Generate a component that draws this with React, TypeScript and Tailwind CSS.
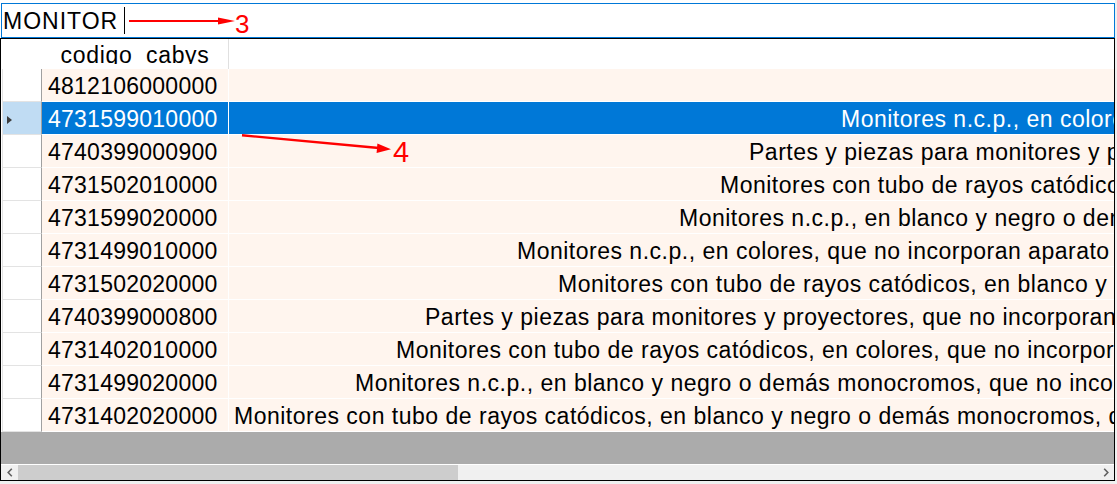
import React from "react";

type Row = {
  code: string;
  desc: string;
  indent: string;
  selected?: boolean;
};

// Descriptions are right-aligned in a column wider than the viewport,
// so each one begins at its own offset and runs past the right edge.
const rows: Row[] = [
  { code: "4812106000000", desc: "", indent: "pl-[6px]" },
  {
    code: "4731599010000",
    desc: "Monitores n.c.p., en colores, que no incorporan aparato receptor de televisión",
    indent: "pl-[612px]",
    selected: true,
  },
  {
    code: "4740399000900",
    desc: "Partes y piezas para monitores y proyectores",
    indent: "pl-[520px]",
  },
  {
    code: "4731502010000",
    desc: "Monitores con tubo de rayos catódicos, en colores",
    indent: "pl-[491px]",
  },
  {
    code: "4731599020000",
    desc: "Monitores n.c.p., en blanco y negro o demás monocromos",
    indent: "pl-[450px]",
  },
  {
    code: "4731499010000",
    desc: "Monitores n.c.p., en colores, que no incorporan aparato de recepción de televisión",
    indent: "pl-[288px]",
  },
  {
    code: "4731502020000",
    desc: "Monitores con tubo de rayos catódicos, en blanco y negro o demás monocromos",
    indent: "pl-[329px]",
  },
  {
    code: "4740399000800",
    desc: "Partes y piezas para monitores y proyectores, que no incorporan aparato receptor de televisión",
    indent: "pl-[196px]",
  },
  {
    code: "4731402010000",
    desc: "Monitores con tubo de rayos catódicos, en colores, que no incorporan aparato receptor de televisión",
    indent: "pl-[167px]",
  },
  {
    code: "4731499020000",
    desc: "Monitores n.c.p., en blanco y negro o demás monocromos, que no incorporan aparato receptor de televisión",
    indent: "pl-[126px]",
  },
  {
    code: "4731402020000",
    desc: "Monitores con tubo de rayos catódicos, en blanco y negro o demás monocromos, que no incorporan aparato receptor de televisión",
    indent: "pl-[5px]",
  },
];

function GridRow({ row }: { row: Row }) {
  const cell = row.selected ? "bg-[#0078d7] text-white" : "bg-[#fff5ee] text-black";
  return (
    <div className="flex h-[33px]">
      {/* row header */}
      <div className="h-full w-[41px] bg-white pl-px">
        <div
          className={`flex h-full items-start border-b border-l border-r border-b-[#e3e3e3] border-l-[#e3e3e3] border-r-[#a0a0a0] pl-[4px] pt-[14px] ${
            row.selected ? "bg-[#c0dcf3]" : "bg-white"
          }`}
        >
          {row.selected && (
            <svg width="6" height="8" viewBox="0 0 6 8">
              <polygon points="0,0 5,4 0,8" fill="#3c3c3c" />
            </svg>
          )}
        </div>
      </div>
      {/* data cells */}
      <div className="flex min-w-0 flex-1 border-b border-white">
        <div
          className={`w-[187px] border-r border-white pl-[6px] pt-[2px] leading-[30px] tracking-[0.25px] ${cell}`}
        >
          {row.code}
        </div>
        <div
          className={`min-w-0 flex-1 overflow-hidden whitespace-nowrap pt-[2px] leading-[30px] tracking-[0.5px] ${cell} ${row.indent}`}
        >
          {row.desc}
        </div>
      </div>
    </div>
  );
}

function Chevron({ dir }: { dir: "left" | "right" }) {
  return (
    <svg width="6" height="9" viewBox="0 0 6 9">
      <polyline
        points={dir === "left" ? "4.8,0.8 1.2,4.5 4.8,8.2" : "1.2,0.8 4.8,4.5 1.2,8.2"}
        fill="none"
        stroke="#606060"
        strokeWidth="1.6"
      />
    </svg>
  );
}

export default function App() {
  return (
    <div className="relative h-[484px] w-[1117px] overflow-hidden bg-[#f0f0f0] font-['Liberation_Sans',Arial,sans-serif] text-[23px] text-black">
      {/* search box */}
      <div className="w-[1115px] bg-white pt-[3px]">
        <div className="ml-px flex h-[35px] w-[1114px] items-start border border-[#0078d7] bg-white pl-px pt-px leading-[32px]">
          <span className="whitespace-pre tracking-[1px]">MONITOR</span>
          <span className="ml-[6px] mt-[2px] h-[27px] w-px bg-black" />
        </div>
      </div>

      {/* data grid */}
      <div className="flex h-[443px] w-[1115px] flex-col border border-black bg-[#ababab]">
        <div className="flex h-[30px] bg-white">
          <div className="w-[41px]" />
          <div className="flex w-[187px] justify-center border-r border-[#e0e0e0]">
            <div className="h-[25px] overflow-hidden pt-[3px] leading-[26px] tracking-[0.7px]">
              codigo_cabys
            </div>
          </div>
          <div className="flex-1" />
        </div>

        {rows.map((r) => (
          <GridRow key={r.code} row={r} />
        ))}

        <div className="h-[32px]" />
        <div className="h-px bg-white" />

        {/* horizontal scrollbar */}
        <div className="flex h-[15px] bg-[#f0f0f0]">
          <div className="flex w-[17px] items-center justify-center">
            <Chevron dir="left" />
          </div>
          <div className="w-[440px] bg-[#cdcdcd]" />
          <div className="flex-1" />
          <div className="flex w-[17px] items-center justify-center">
            <Chevron dir="right" />
          </div>
        </div>
      </div>

      {/* annotations drawn over the grid */}
      <svg
        className="pointer-events-none absolute left-0 top-0"
        width="1117"
        height="484"
        viewBox="0 0 1117 484"
      >
        <line x1="129" y1="21" x2="222" y2="21" stroke="#ff0000" strokeWidth="2" />
        <polygon points="218,17.5 235,21 218,24.5" fill="#ff0000" />
        <line x1="242" y1="135.3" x2="379" y2="148" stroke="#ff0000" strokeWidth="2.4" />
        <polygon points="377.4,143.5 391,149.3 376.6,152.9" fill="#ff0000" />
      </svg>
      <span className="pointer-events-none absolute left-[235px] top-[11px] text-[26px] leading-[26px] text-[#ff0000]">
        3
      </span>
      <span className="pointer-events-none absolute left-[393px] top-[138px] text-[29px] leading-[29px] text-[#ff0000]">
        4
      </span>
    </div>
  );
}
